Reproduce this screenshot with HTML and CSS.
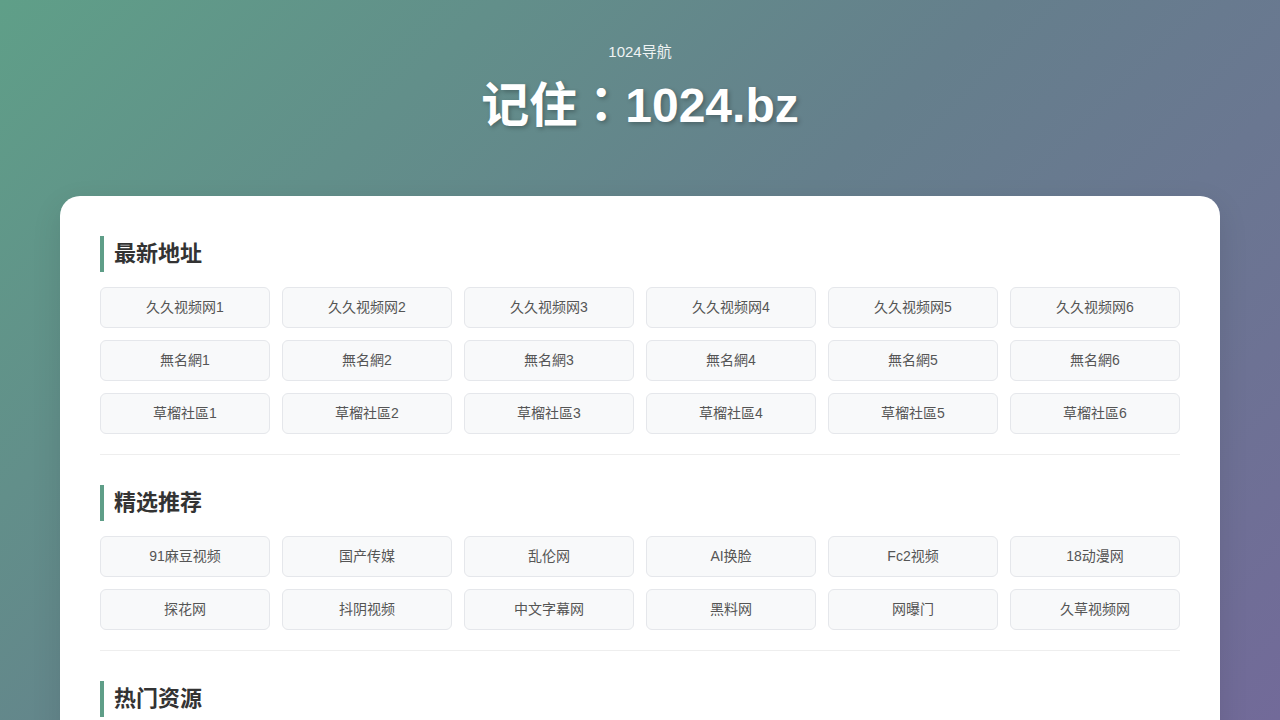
FILE: index.html
```html
<!DOCTYPE html>
<html lang="zh-CN">
<head>
<meta charset="utf-8">
<title>1024导航</title>
<link rel="stylesheet" href="styles.css">
</head>
<body>
<header class="hero">
  <div class="sub">1024导航</div>
  <h1 class="title" lang="zh-TW">记住：1024.bz</h1>
</header>
<main class="card">
  <section class="section">
    <h2 class="sec-title">最新地址</h2>
    <div class="grid">
      <a class="btn">久久视频网1</a><a class="btn">久久视频网2</a><a class="btn">久久视频网3</a><a class="btn">久久视频网4</a><a class="btn">久久视频网5</a><a class="btn">久久视频网6</a>
      <a class="btn">無名網1</a><a class="btn">無名網2</a><a class="btn">無名網3</a><a class="btn">無名網4</a><a class="btn">無名網5</a><a class="btn">無名網6</a>
      <a class="btn">草榴社區1</a><a class="btn">草榴社區2</a><a class="btn">草榴社區3</a><a class="btn">草榴社區4</a><a class="btn">草榴社區5</a><a class="btn">草榴社區6</a>
    </div>
  </section>
  <hr class="divider">
  <section class="section">
    <h2 class="sec-title">精选推荐</h2>
    <div class="grid">
      <a class="btn">91麻豆视频</a><a class="btn">国产传媒</a><a class="btn">乱伦网</a><a class="btn">AI换脸</a><a class="btn">Fc2视频</a><a class="btn">18动漫网</a>
      <a class="btn">探花网</a><a class="btn">抖阴视频</a><a class="btn">中文字幕网</a><a class="btn">黑料网</a><a class="btn">网曝门</a><a class="btn">久草视频网</a>
    </div>
  </section>
  <hr class="divider">
  <section class="section">
    <h2 class="sec-title">热门资源</h2>
  </section>
</main>
</body>
</html>
```
FILE: styles.css
```css
html, body {
  margin: 0;
  padding: 0;
}
body {
  min-height: 100vh;
  font-family: "Liberation Sans", "Noto Sans CJK SC", sans-serif;
  background: linear-gradient(135deg, #5f9f88 0%, #657f8c 50%, #726a99 100%);
  background-attachment: fixed;
  color: #333;
}
.hero {
  text-align: center;
  color: #fff;
  padding-top: 41px;
}
.sub {
  font-size: 15px;
  line-height: 22px;
  opacity: 0.9;
}
.title {
  margin: 14px 0 0;
  font-family: "Liberation Sans", "Noto Sans CJK TC", sans-serif;
  font-size: 48px;
  line-height: 58px;
  font-weight: bold;
  text-shadow: 2px 2px 4px rgba(0, 0, 0, 0.25);
}
.card {
  margin: 61px 60px 0;
  background: #fff;
  border-radius: 20px;
  padding: 40px 40px 30px;
  box-shadow: 0 10px 30px rgba(0, 0, 0, 0.1);
}
.sec-title {
  margin: 0 0 15px;
  border-left: 4px solid #5f9e88;
  padding-left: 10px;
  font-size: 22px;
  line-height: 36px;
  font-weight: bold;
  color: #333;
}
.grid {
  display: grid;
  grid-template-columns: repeat(6, 1fr);
  gap: 12px;
}
.btn {
  display: block;
  height: 39px;
  line-height: 39px;
  text-align: center;
  font-size: 14px;
  color: #555;
  background: #f8f9fa;
  border: 1px solid #e5e7eb;
  border-radius: 6px;
  text-decoration: none;
}
.divider {
  border: 0;
  border-top: 1px solid #eeeeee;
  margin: 20px 0 30px;
}
```
